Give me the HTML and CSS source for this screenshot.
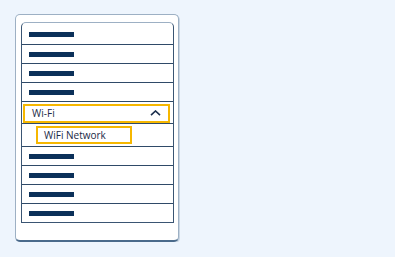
FILE: index.html
```html
<!DOCTYPE html>
<html lang="en">
<head>
    <meta charset="UTF-8">
    <meta name="viewport" content="width=device-width, initial-scale=1.0">
    <title>Settings Menu</title>
    <link rel="stylesheet" href="styles.css">
</head>
<body>
    <div class="device">
        <div class="menu">
            <div class="row first"><span class="bar"></span></div>
            <div class="row"><span class="bar"></span></div>
            <div class="row"><span class="bar"></span></div>
            <div class="row"><span class="bar"></span></div>

            <div class="row open">
                <div class="focus">
                    <span>Wi-Fi</span>
                    <svg class="chevron" width="11" height="6" viewBox="0 0 11 6">
                        <path d="M1 5.2 L5.5 1 L10 5.2" fill="none" stroke="#1c2f4d" stroke-width="1.6"/>
                    </svg>
                </div>
            </div>
            <div class="row sub">
                <div class="sub-item">WiFi Network</div>
            </div>

            <div class="row"><span class="bar"></span></div>
            <div class="row"><span class="bar"></span></div>
            <div class="row"><span class="bar"></span></div>
            <div class="row last"><span class="bar"></span></div>
        </div>
    </div>
</body>
</html>
```

FILE: styles.css
```css
* {
    box-sizing: border-box;
    margin: 0;
    padding: 0;
}

body {
    font-family: "Open Sans", Arial, sans-serif;
    background-color: #eef5fd;
    padding: 14px 0 0 15px;
    color: #1a2946;
}

.device {
    width: 164px;
    height: 228px;
    padding: 7px 5px 0 5px;
    background: white;
    border: 1px solid #9db0c4;
    border-bottom: 2px solid #4a6a8b;
    border-radius: 5px;
    box-shadow: 1px 1px 0 #c9d6e3;
}

.menu {
    display: flex;
    flex-direction: column;
    width: 153px;
    border: 1px solid #3a5573;
    border-top-color: #9db0c4;
    border-radius: 5px 5px 0 0;
}

.row {
    display: flex;
    align-items: center;
    height: 19px;
    padding-left: 7px;
    border-bottom: 1px solid #2f4a68;
}

.row.first {
    height: 22px;
    padding-top: 2px;
}

.row.last {
    height: 18px;
    border-bottom: none;
}

.bar {
    display: block;
    width: 45px;
    height: 5px;
    background: #0b3059;
}

.row.open {
    height: 22px;
    padding: 1px 3px 0 1px;
}

.focus {
    display: flex;
    align-items: center;
    justify-content: space-between;
    width: 100%;
    height: 19px;
    padding: 0 7px 0 7px;
    border: 2px solid #f6b700;
    font-size: 10px;
}

.chevron {
    display: block;
}

.row.sub {
    height: 23px;
    padding-left: 14px;
}

.sub-item {
    width: 96px;
    height: 18px;
    padding-left: 6px;
    border: 2px solid #f6b700;
    font-size: 10px;
    line-height: 14px;
}
```
